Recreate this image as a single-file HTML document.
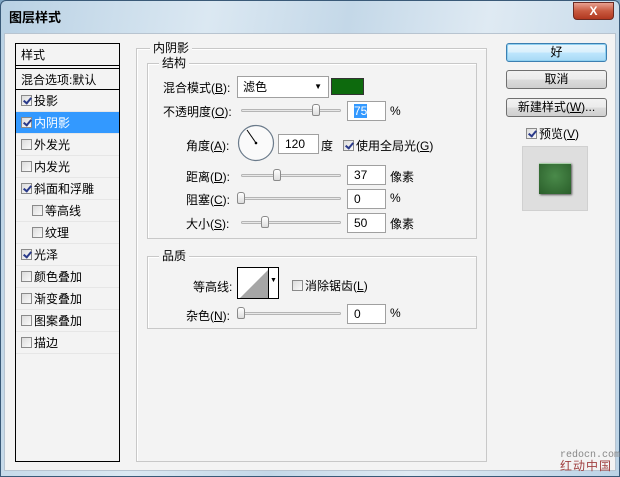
<!DOCTYPE html>
<html><head><meta charset="utf-8"><style>
*{box-sizing:border-box;margin:0;padding:0}
body{width:620px;height:477px;overflow:hidden;font-family:"Liberation Sans","Noto Sans CJK SC",sans-serif;font-size:12px;color:#000;background:#7fa6c4}
.win{position:absolute;left:0;top:0;width:620px;height:477px;background:linear-gradient(100deg,#b9d1e4 0%,#dbe8f2 30%,#c4d8e8 50%,#dfeaf3 70%,#bcd3e6 100%);border:1px solid #3a5a78;border-radius:6px 6px 0 0}
.title{position:absolute;left:8px;top:6px;font-weight:bold;font-size:13px}
.close{position:absolute;left:572px;top:1px;width:41px;height:18px;border:1px solid #6b2a22;border-radius:0 0 4px 4px;background:linear-gradient(#e8a090,#c85a40 50%,#b03820);color:#fff;text-align:center;font-weight:bold;font-size:12px;line-height:16px}
.client{position:absolute;left:3px;top:32px;width:612px;height:438px;background:#f3f3f3;border:1px solid #b8c4d0}
.a{position:absolute}
.list{position:absolute;left:14px;top:42px;width:105px;height:419px;border:1px solid #000;background:#f3f3f3}
.it{position:absolute;left:0;width:103px;height:22px;line-height:22px;padding-left:5px;border-bottom:1px solid #e6e6e6}
.cb{display:inline-block;width:11px;height:11px;border:1px solid #8a8a8a;background:linear-gradient(135deg,#dcdcdc,#fafafa);vertical-align:-1px;margin-right:2px;position:relative}
.cb.on::after{content:"";position:absolute;left:3px;top:0px;width:3px;height:6px;border:solid #2a3a8a;border-width:0 2px 2px 0;transform:rotate(40deg)}
.fs{position:absolute;border:1px solid #c8c8c8;box-shadow:1px 1px 0 #fff inset}
.lg{position:absolute;background:#f3f3f3;padding:0 3px;line-height:13px}
.inp{position:absolute;height:20px;border:1px solid #a0a0a0;background:#fff;line-height:18px;padding-left:6px}
.tr{position:absolute;height:3px;border:1px solid #b5b5b5;background:#e8e8e8;border-radius:2px}
.th{position:absolute;width:8px;height:12px;border:1px solid #8a8a8a;border-radius:3px 3px 2px 2px;background:linear-gradient(#fff,#ddd)}
.btn{position:absolute;left:505px;width:101px;height:19px;border:1px solid #707070;border-radius:3px;background:linear-gradient(#f2f2f2 0%,#ebebeb 50%,#dcdcdc 51%,#cfcfcf);text-align:center;line-height:17px}
u{text-decoration:underline}
</style></head><body>
<div class="win">
<div class="title">图层样式</div>
<div class="close">X</div>
<div class="client"></div>

<div class="list">
<div class="it" style="top:0;height:22px;border-bottom:1px solid #000">样式</div>
<div class="it" style="top:24px;border-top:1px solid #000;border-bottom:1px solid #000">混合选项:默认</div>
<div class="it" style="top:46px"><span class="cb on"></span>投影</div>
<div class="it" style="top:68px;background:#3399ff;color:#fff"><span class="cb on"></span>内阴影</div>
<div class="it" style="top:90px"><span class="cb"></span>外发光</div>
<div class="it" style="top:112px"><span class="cb"></span>内发光</div>
<div class="it" style="top:134px"><span class="cb on"></span>斜面和浮雕</div>
<div class="it" style="top:156px;padding-left:16px"><span class="cb"></span>等高线</div>
<div class="it" style="top:178px;padding-left:16px"><span class="cb"></span>纹理</div>
<div class="it" style="top:200px"><span class="cb on"></span>光泽</div>
<div class="it" style="top:222px"><span class="cb"></span>颜色叠加</div>
<div class="it" style="top:244px"><span class="cb"></span>渐变叠加</div>
<div class="it" style="top:266px"><span class="cb"></span>图案叠加</div>
<div class="it" style="top:288px"><span class="cb"></span>描边</div>
</div>

<div class="fs" style="left:135px;top:47px;width:351px;height:414px"></div>
<div class="lg" style="left:149px;top:41px">内阴影</div>
<div class="fs" style="left:146px;top:62px;width:330px;height:176px"></div>
<div class="lg" style="left:158px;top:56px">结构</div>

<div class="a" style="left:162px;top:78px">混合模式(<u>B</u>):</div>
<div class="inp" style="left:236px;top:75px;width:92px;height:22px;padding-left:5px;line-height:20px">滤色<span style="position:absolute;right:6px;top:0;font-size:8px">▼</span></div>
<div class="a" style="left:330px;top:77px;width:33px;height:17px;background:#0d6a0d;border:1px solid #333"></div>

<div class="a" style="left:162px;top:102px">不透明度(<u>O</u>):</div>
<div class="tr" style="left:240px;top:108px;width:100px"></div>
<div class="th" style="left:311px;top:103px"></div>
<div class="inp" style="left:346px;top:100px;width:39px"><span style="background:#3399ff;color:#fff">75</span></div>
<div class="a" style="left:389px;top:103px">%</div>

<div class="a" style="left:185px;top:136px">角度(<u>A</u>):</div>
<svg class="a" style="left:236px;top:123px" width="38" height="38"><circle cx="19" cy="19" r="17.5" fill="#fafafa" stroke="#6a7a8a" stroke-width="1.2"/><line x1="19" y1="19" x2="10" y2="6" stroke="#000"/><circle cx="19" cy="19" r="1.3"/></svg>
<div class="inp" style="left:277px;top:133px;width:41px">120</div>
<div class="a" style="left:320px;top:136px">度</div>
<div class="a" style="left:342px;top:136px"><span class="cb on"></span>使用全局光(<u>G</u>)</div>

<div class="a" style="left:185px;top:167px">距离(<u>D</u>):</div>
<div class="tr" style="left:240px;top:173px;width:100px"></div>
<div class="th" style="left:272px;top:168px"></div>
<div class="inp" style="left:346px;top:164px;width:39px">37</div>
<div class="a" style="left:389px;top:167px">像素</div>

<div class="a" style="left:185px;top:190px">阻塞(<u>C</u>):</div>
<div class="tr" style="left:236px;top:196px;width:104px"></div>
<div class="th" style="left:236px;top:191px"></div>
<div class="inp" style="left:346px;top:188px;width:39px">0</div>
<div class="a" style="left:389px;top:190px">%</div>

<div class="a" style="left:185px;top:214px">大小(<u>S</u>):</div>
<div class="tr" style="left:240px;top:220px;width:100px"></div>
<div class="th" style="left:260px;top:215px"></div>
<div class="inp" style="left:346px;top:212px;width:39px">50</div>
<div class="a" style="left:389px;top:214px">像素</div>

<div class="fs" style="left:146px;top:255px;width:330px;height:73px"></div>
<div class="lg" style="left:158px;top:249px">品质</div>
<div class="a" style="left:192px;top:277px">等高线:</div>
<div class="a" style="left:236px;top:266px;width:42px;height:32px;border:1px solid #000;background:#fff">
<svg width="30" height="30" style="position:absolute;left:0;top:0"><polygon points="2,30 30,2 30,30" fill="#a6a6a6"/></svg>
<div style="position:absolute;left:30px;top:0;width:1px;height:30px;background:#000"></div>
<span style="position:absolute;left:32px;top:9px;font-size:7px">▼</span></div>
<div class="a" style="left:291px;top:276px"><span class="cb"></span>消除锯齿(<u>L</u>)</div>

<div class="a" style="left:185px;top:306px">杂色(<u>N</u>):</div>
<div class="tr" style="left:236px;top:311px;width:104px"></div>
<div class="th" style="left:236px;top:306px"></div>
<div class="inp" style="left:346px;top:303px;width:39px">0</div>
<div class="a" style="left:389px;top:305px">%</div>

<div class="btn" style="top:42px;border-color:#3c7fb1;box-shadow:0 0 0 1px #8fd0f0 inset;background:linear-gradient(#eaf6fd,#d9f0fc 50%,#bee6fd 51%,#a7d9f5)">好</div>
<div class="btn" style="top:69px">取消</div>
<div class="btn" style="top:97px">新建样式(<u>W</u>)...</div>
<div class="a" style="left:525px;top:124px"><span class="cb on"></span>预览(<u>V</u>)</div>
<div class="a" style="left:521px;top:145px;width:66px;height:65px;background:#dedede;border:1px solid #d0d0d0"></div>
<div class="a" style="left:538px;top:162px;width:32px;height:31px;background:radial-gradient(circle at 50% 40%,#4a8a4a,#2a5e2a);border-top:1px solid #a8d0a8;box-shadow:1px 1px 2px #555"></div>

<div class="a" style="left:559px;top:449px;font-family:'Liberation Mono',monospace;font-size:10px;color:#888">redocn.com</div>
<div class="a" style="left:559px;top:456px;font-size:12px;color:#a04040;letter-spacing:1px">红动中国</div>
</div>
</body></html>
